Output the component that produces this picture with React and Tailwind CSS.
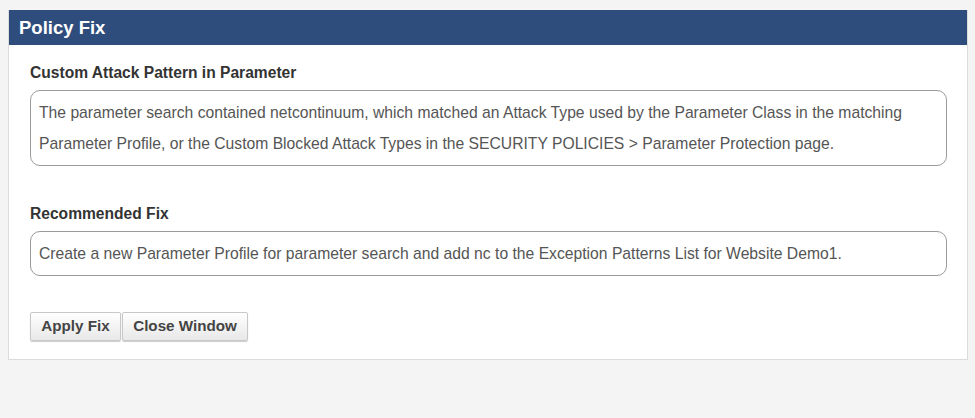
export default function App() {
  return (
    <div className="w-[975px] h-[418px] bg-[#f4f4f4] pt-[10px] pl-[8px] font-['Liberation_Sans',Arial,sans-serif]">
      <div className="w-[960px] bg-white border border-[#dcdcdc] border-t-0">
        <div className="h-[35px] bg-[#2f4d7c] flex items-center pl-[10px] text-white text-[18.5px] font-bold">
          Policy Fix
        </div>
        <div className="pl-[21px] pr-[20px] pt-[18px] pb-[18px]">
          <div className="text-[15.6px] leading-[20px] font-bold text-[#333]">Custom Attack Pattern in Parameter</div>
          <div className="mt-[7px] border border-[#9a9a9a] rounded-[10px] px-[8px] py-[6px] text-[15.7px] leading-[31px] text-[#555]">
            The parameter search contained netcontinuum, which matched an Attack Type used by the Parameter Class in the matching Parameter Profile, or the Custom Blocked Attack Types in the SECURITY POLICIES &gt; Parameter Protection page.
          </div>
          <div className="mt-[38px] text-[15.6px] leading-[20px] font-bold text-[#333]">Recommended Fix</div>
          <div className="mt-[7px] border border-[#9a9a9a] rounded-[10px] px-[8px] py-[6px] text-[15.7px] leading-[31px] text-[#555]">
            Create a new Parameter Profile for parameter search and add nc to the Exception Patterns List for Website Demo1.
          </div>
          <div className="mt-[36px] flex gap-[1px]">
            <button className="w-[91px] h-[29px] text-[15.2px] font-bold text-[#444] border border-[#c8c8c8] rounded-[2px] bg-gradient-to-b from-white to-[#e8e8e8] shadow-[0_1px_1px_rgba(0,0,0,0.2)]">
              Apply Fix
            </button>
            <button className="w-[126px] h-[29px] text-[15.2px] font-bold text-[#444] border border-[#c8c8c8] rounded-[2px] bg-gradient-to-b from-white to-[#e8e8e8] shadow-[0_1px_1px_rgba(0,0,0,0.2)]">
              Close Window
            </button>
          </div>
        </div>
      </div>
    </div>
  );
}
